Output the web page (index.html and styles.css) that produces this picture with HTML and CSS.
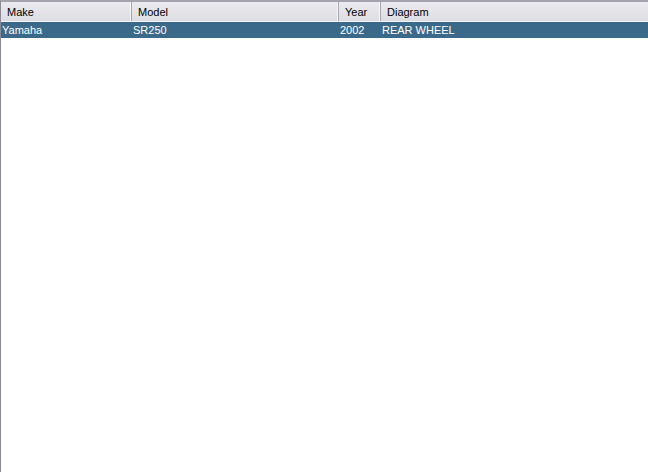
FILE: index.html
```html
<!DOCTYPE html>
<html lang="en">
<head>
  <meta charset="UTF-8">
  <title>Diagrams</title>
  <link rel="stylesheet" href="styles.css">
</head>
<body>
  <div class="list">
    <div class="header">
      <div class="col make">Make</div>
      <div class="col model">Model</div>
      <div class="col year">Year</div>
      <div class="col diagram">Diagram</div>
    </div>
    <div class="row selected">
      <div class="cell">Yamaha</div>
      <div class="cell">SR250</div>
      <div class="cell">2002</div>
      <div class="cell">REAR WHEEL</div>
    </div>
  </div>
</body>
</html>
```

FILE: styles.css
```css
/* List view */
body {
  margin: 0;
  padding: 0;
  background-color: #ffffff;
  font-family: 'Liberation Sans', Arial, sans-serif;
  font-size: 11px;
}

.list {
  width: 648px;
  height: 472px;
  box-sizing: border-box;
  border-left: 1px solid #8a8a96;
  border-top: 2px solid #a4a4ac;
  background-color: #ffffff;
}

.header,
.row {
  display: grid;
  grid-template-columns: 131px 207px 42px 1fr;
}

.header {
  height: 19px;
  background: linear-gradient(#ebebef, #dcdce2);
  border-bottom: 1px solid #f4f4f8;
  color: #000000;
}

.col {
  padding-top: 1px;
  line-height: 18px;
  padding-left: 6px;
  border-right: 1px solid #a6a6ae;
  box-shadow: inset -1px 0 0 #f6f6f8;
}

.col.diagram {
  border-right: none;
  box-shadow: none;
}

.row {
  height: 16px;
}

.row.selected {
  background-color: #3b6989;
  color: #ffffff;
}

.cell {
  padding-top: 1px;
  line-height: 15px;
  padding-left: 1px;
  white-space: nowrap;
}
```
